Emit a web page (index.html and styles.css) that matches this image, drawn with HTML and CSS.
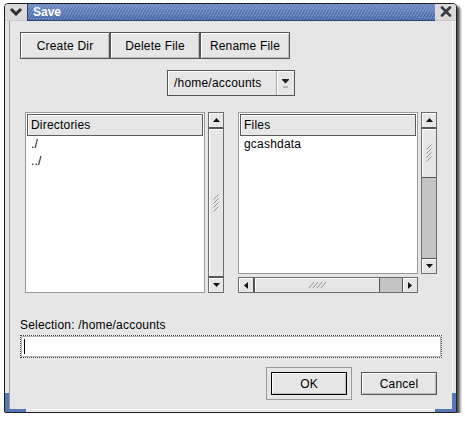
FILE: index.html
```html
<!DOCTYPE html>
<html>
<head>
<meta charset="utf-8">
<title>Save</title>
<link rel="stylesheet" href="styles.css">
</head>
<body>
<div class="window">
  <div class="titlebar">
    <div class="tb-btn tb-menu">
      <svg width="14" height="9" viewBox="0 0 14 9"><path d="M2 2 L7 7 L12 2" fill="none" stroke="#2e2e2e" stroke-width="3" stroke-linejoin="miter"/></svg>
    </div>
    <div class="tb-title">Save</div>
    <div class="tb-btn tb-close">
      <svg width="12" height="11" viewBox="0 0 12 11"><path d="M2 1.5 L10 9.5 M10 1.5 L2 9.5" fill="none" stroke="#3a3a3a" stroke-width="2.6" stroke-linecap="round"/></svg>
    </div>
  </div>
  <div class="frame">
    <div class="toolbar">
      <button class="btn tool">Create Dir</button>
      <button class="btn tool">Delete File</button>
      <button class="btn tool">Rename File</button>
    </div>
    <div class="combo-row">
      <div class="combo">
        <span class="combo-text">/home/accounts</span>
        <span class="combo-arrow">
          <svg width="9" height="11" viewBox="0 0 9 11"><path d="M1 1 H8 V2 L4.5 5.5 L1 2 Z" fill="#222"/><rect x="2" y="8" width="5" height="2" fill="#b2b2b2"/></svg>
        </span>
      </div>
    </div>
    <div class="lists">
      <div class="panel panel-left">
        <div class="list">
          <div class="list-head">Directories</div>
          <div class="row">./</div>
          <div class="row">../</div>
        </div>
        <div class="vscroll">
          <div class="sb-btn up"><svg width="7" height="4" viewBox="0 0 7 4"><path d="M0 4 L3.5 0 L7 4 Z" fill="#111"/></svg></div>
          <div class="sb-thumb fill"><svg width="8" height="20" viewBox="0 0 8 20"><path d="M1.5 6.5L6.5 1.5M1.5 10.5L6.5 5.5M1.5 14.5L6.5 9.5M1.5 18.5L6.5 13.5" stroke="#909090" stroke-width="1" fill="none"/></svg></div>
          <div class="sb-btn down"><svg width="7" height="4" viewBox="0 0 7 4"><path d="M0 0 L3.5 4 L7 0 Z" fill="#111"/></svg></div>
        </div>
      </div>
      <div class="panel panel-right">
        <div class="list">
          <div class="list-head">Files</div>
          <div class="row">gcashdata</div>
        </div>
        <div class="vscroll">
          <div class="sb-btn up"><svg width="7" height="4" viewBox="0 0 7 4"><path d="M0 4 L3.5 0 L7 4 Z" fill="#111"/></svg></div>
          <div class="sb-thumb part"><svg width="8" height="20" viewBox="0 0 8 20"><path d="M1.5 6.5L6.5 1.5M1.5 10.5L6.5 5.5M1.5 14.5L6.5 9.5M1.5 18.5L6.5 13.5" stroke="#909090" stroke-width="1" fill="none"/></svg></div>
          <div class="sb-btn down"><svg width="7" height="4" viewBox="0 0 7 4"><path d="M0 0 L3.5 4 L7 0 Z" fill="#111"/></svg></div>
        </div>
        <div class="hscroll">
          <div class="sb-btn left"><svg width="4" height="7" viewBox="0 0 4 7"><path d="M4 0 L0 3.5 L4 7 Z" fill="#111"/></svg></div>
          <div class="sb-thumb"><svg width="18" height="8" viewBox="0 0 18 8"><path d="M1 7L6 1M5 7L10 1M9 7L14 1M13 7L18 1" stroke="#909090" stroke-width="1" fill="none"/></svg></div>
          <div class="sb-btn right"><svg width="4" height="7" viewBox="0 0 4 7"><path d="M0 0 L4 3.5 L0 7 Z" fill="#111"/></svg></div>
        </div>
      </div>
    </div>
    <div class="sel-label">Selection: /home/accounts</div>
    <div class="sel-input"><span class="caret"></span></div>
    <div class="actions">
      <div class="default-frame"><button class="btn action ok">OK</button></div>
      <button class="btn action">Cancel</button>
    </div>
  </div>
  <span class="corner bl"></span>
  <span class="corner br"></span>
</div>
</body>
</html>
```
FILE: styles.css
```css
* { box-sizing: border-box; }
html, body { margin: 0; padding: 0; background: #fff; }
body {
  font-family: "Liberation Sans", Arial, sans-serif;
  font-size: 12px;
  letter-spacing: 0.2px;
  color: #000;
}

.window {
  position: relative;
  width: 453px;
  height: 410px;
  margin: 3px 0 0 4px;
  border: 1px solid #1e1e1e;
  border-radius: 4px 4px 2px 2px;
  background: #e6e6e6;
  box-shadow: 3px 3px 3px rgba(0, 0, 0, 0.7);
  display: flex;
  flex-direction: column;
}

/* title bar */
.titlebar { display: flex; height: 17px; flex: none; }
.tb-btn {
  background: #dadada;
  display: flex;
  align-items: center;
  justify-content: center;
  border-bottom: 1px solid #c8c8c8;
}
.tb-menu { width: 22px; border-radius: 3px 0 0 0; padding-bottom: 1px; }
.tb-close { width: 21px; border-radius: 0 3px 0 0; padding-bottom: 1px; }
.tb-title {
  flex: 1;
  color: #fff;
  font-weight: bold;
  letter-spacing: 0;
  line-height: 16px;
  padding-left: 5px;
  border-left: 1px solid #2c4478;
  border-bottom: 1px solid #2c4478;
  background:
    repeating-linear-gradient(120deg, rgba(255,255,255,0) 0 1.6px, rgba(255,255,255,0.22) 1.6px 2.6px),
    linear-gradient(#6a87c4, #4767a9);
}

/* frame content */
.frame {
  flex: 1;
  margin: 0 3px 2px 4px;
  border-left: 1px solid #9c9c9c;
  border-right: 1px solid #f8f8f8;
  border-bottom: 1px solid #f8f8f8;
  padding: 0 10px;
  display: flex;
  flex-direction: column;
}

.btn {
  font: inherit;
  letter-spacing: 0.2px;
  color: #000;
  background: #e6e6e6;
  border: 1px solid #555;
  box-shadow: inset 1px 1px 0 #fff, inset -1px -1px 0 #bcbcbc;
  padding: 0;
  margin: 0;
  display: flex;
  align-items: center;
  justify-content: center;
}

.toolbar { display: flex; margin-top: 11px; }
.tool { width: 90px; height: 27px; }

.combo-row { display: flex; justify-content: center; margin-top: 11px; }
.combo {
  display: flex;
  width: 128px;
  height: 26px;
  border: 1px solid #555;
  background: #e6e6e6;
  box-shadow: inset 1px 1px 0 #fff;
}
.combo-text { flex: 1; padding-left: 6px; line-height: 24px; }
.combo-arrow {
  width: 18px;
  border-left: 1px solid #a4a4a4;
  box-shadow: inset 1px 0 0 #fff;
  display: flex;
  align-items: center;
  justify-content: center;
}

/* lists */
.lists {
  display: grid;
  grid-template-columns: 199px 199px;
  column-gap: 14px;
  margin: 16px 5px 0;
}
.panel {
  display: grid;
  grid-template-columns: 180px 16px;
  column-gap: 3px;
  height: 181px;
}
.panel-left { grid-template-rows: 181px; }
.panel-right { grid-template-rows: 162px 16px; row-gap: 3px; }

.list {
  border: 1px solid #9a9a9a;
  padding: 1px;
  background: #fff;
  overflow: hidden;
}
.list-head {
  height: 22px;
  line-height: 20px;
  padding-left: 3px;
  background: #e6e6e6;
  border: 1px solid #5a5a5a;
  box-shadow: inset 1px 1px 0 #fff;
}
.row { line-height: 17px; padding-left: 4px; }

/* scrollbars */
.vscroll {
  display: flex;
  flex-direction: column;
  border: 1px solid #6c6c6c;
  background: #c4c4c4;
}
.sb-btn {
  flex: none;
  background: #e6e6e6;
  box-shadow: inset 1px 1px 0 #fff;
  display: flex;
  align-items: center;
  justify-content: center;
}
.vscroll .sb-btn { height: 15px; }
.vscroll .up { border-bottom: 1px solid #555; }
.vscroll .down { border-top: 1px solid #555; margin-top: auto; }
.sb-thumb {
  background: #e6e6e6;
  box-shadow: inset 1px 1px 0 #fff;
  display: flex;
  align-items: center;
  justify-content: center;
}
.vscroll .sb-thumb { border-top: 1px solid #555; border-bottom: 1px solid #555; }
.sb-thumb.fill { flex: 1; }
.sb-thumb.part { flex: none; height: 50px; }

.hscroll {
  display: flex;
  border: 1px solid #6c6c6c;
  background: #c4c4c4;
}
.hscroll .sb-btn { width: 15px; }
.hscroll .left { border-right: 1px solid #555; }
.hscroll .right { border-left: 1px solid #555; margin-left: auto; }
.hscroll .sb-thumb { width: 126px; border-left: 1px solid #555; border-right: 1px solid #555; }

/* selection */
.sel-label { margin-top: 25px; line-height: 14px; }
.sel-input {
  margin-top: 3px;
  height: 23px;
  background: #fff;
  border: 1px dotted #3c3c3c;
  box-shadow: inset 0 0 0 1px #b4b4b4;
  padding: 3px 0 0 3px;
}
.caret { display: block; width: 1px; height: 15px; background: #000; }

/* actions */
.actions {
  display: flex;
  justify-content: flex-end;
  align-items: center;
  gap: 9px;
  margin-top: 9px;
  padding-right: 5px;
}
.default-frame {
  width: 86px;
  height: 33px;
  border: 1px solid #9a9a9a;
  padding: 4px;
}
.action { width: 76px; height: 23px; }
.ok { border-color: #000; }

/* blue frame corners */
.corner {
  position: absolute;
  bottom: 0;
  width: 21px;
  height: 19px;
  border-bottom: 3px solid #5877b6;
}
.corner.bl { left: 0; border-left: 4px solid #5877b6; }
.corner.br { right: 0; border-right: 4px solid #5877b6; }
```
